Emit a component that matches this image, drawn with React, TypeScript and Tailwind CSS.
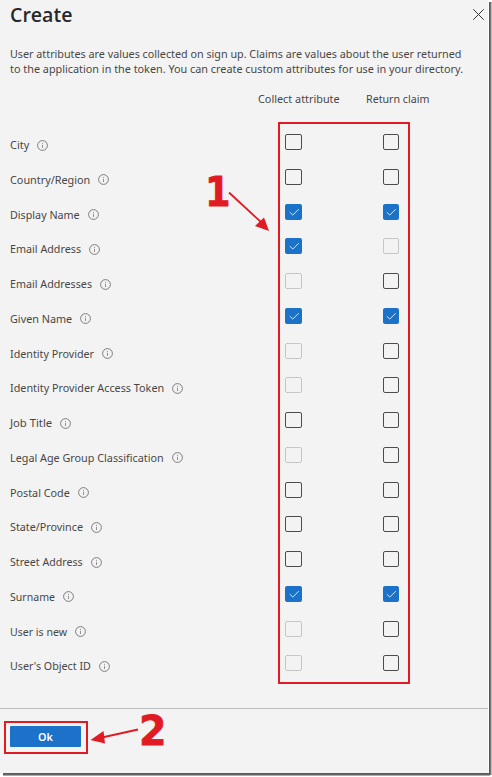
import { useLayoutEffect, useRef } from "react";

type Box = "on" | "off" | "disabled";

const rows: { label: string; width: number; collect: Box; claim: Box }[] = [
  { label: "City", width: 19, collect: "off", claim: "off" },
  { label: "Country/Region", width: 80, collect: "off", claim: "off" },
  { label: "Display Name", width: 70, collect: "on", claim: "on" },
  { label: "Email Address", width: 71, collect: "on", claim: "disabled" },
  { label: "Email Addresses", width: 82, collect: "disabled", claim: "off" },
  { label: "Given Name", width: 62, collect: "on", claim: "on" },
  { label: "Identity Provider", width: 84, collect: "disabled", claim: "off" },
  { label: "Identity Provider Access Token", width: 154, collect: "disabled", claim: "off" },
  { label: "Job Title", width: 42, collect: "off", claim: "off" },
  { label: "Legal Age Group Classification", width: 154, collect: "disabled", claim: "off" },
  { label: "Postal Code", width: 60, collect: "off", claim: "off" },
  { label: "State/Province", width: 73, collect: "off", claim: "off" },
  { label: "Street Address", width: 73, collect: "off", claim: "off" },
  { label: "Surname", width: 45, collect: "on", claim: "on" },
  { label: "User is new", width: 57, collect: "disabled", claim: "off" },
  { label: "User's Object ID", width: 81, collect: "disabled", claim: "off" },
];

/* Text condensed or widened to occupy an exact width. */
function FitText({ text, width, className = "" }: { text: string; width: number; className?: string }) {
  const ref = useRef<HTMLSpanElement>(null);
  useLayoutEffect(() => {
    const el = ref.current;
    if (el) el.style.transform = `scaleX(${width / el.offsetWidth})`;
  }, [width, text]);
  return (
    <span className={`block shrink-0 whitespace-nowrap ${className}`} style={{ width }}>
      <span ref={ref} className="inline-block origin-left">
        {text}
      </span>
    </span>
  );
}

function InfoIcon() {
  return (
    <svg className="ml-2 size-[11px] shrink-0" viewBox="0 0 11 11" fill="none">
      <circle cx="5.5" cy="5.5" r="4.9" stroke="#707070" strokeWidth="0.9" />
      <path d="M5.5 4.8v3.2M5.5 2.9v1" stroke="#858585" strokeWidth="0.9" />
    </svg>
  );
}

function Checkbox({ state }: { state: Box }) {
  if (state === "on") {
    return (
      <span className="flex h-4 w-full items-center justify-center rounded-[2px] bg-[#1b72c8]">
        <svg className="size-4" viewBox="0 0 16 16" fill="none">
          <path d="M3.8 8.2l3 2.9 6-6" stroke="#d3e6f7" strokeWidth="1" />
        </svg>
      </span>
    );
  }
  return (
    <span
      className={`block h-4 w-full rounded-[2px] border ${state === "off" ? "border-[#4c4c4c]" : "border-[#c6c6c6]"}`}
    />
  );
}

export default function App() {
  return (
    <div className="relative h-[777px] w-[492px] overflow-hidden bg-white font-['Noto_Sans',sans-serif] text-[11.5px] text-[#484644]">
      <div className="flex h-[774px] w-[488px] flex-col bg-[#f3f3f3]">
        <header className="flex h-[46px] items-start justify-between pl-[10px]">
          <FitText
            text="Create"
            width={62}
            className="font-['Open_Sans','Noto_Sans',sans-serif] text-[20.5px] leading-[28px] font-semibold text-[#292827]"
          />
          <svg className="mt-[9px] mr-[4px] size-[11px]" viewBox="0 0 11 11" fill="none">
            <path d="M.3.3l10.4 10.4M10.7.3L.3 10.7" stroke="#333" strokeWidth="1" />
          </svg>
        </header>
        <div className="h-[44px] pl-[10px] leading-[15px]">
          <FitText
            text="User attributes are values collected on sign up. Claims are values about the user returned"
            width={451}
          />
          <FitText
            text="to the application in the token. You can create custom attributes for use in your directory."
            width={453}
          />
        </div>
        <div className="flex h-[44px] pt-px pl-[258px] leading-[16px]">
          <FitText text="Collect attribute" width={82} />
          <FitText text="Return claim" width={63} className="ml-[26px]" />
        </div>
        <div className="flex flex-1 flex-col">
          {rows.map((r) => (
            <div key={r.label} className="flex h-[34.78px] items-start">
              <div className="flex w-[285px] items-center pt-[3px] pl-[10px] leading-4">
                <FitText text={r.label} width={r.width} />
                <InfoIcon />
              </div>
              <div className="w-[17px]">
                <Checkbox state={r.collect} />
              </div>
              <div className="ml-[81px] w-4">
                <Checkbox state={r.claim} />
              </div>
            </div>
          ))}
        </div>
        <footer className="h-[66px] border-t border-[#bdbdbd] pt-[17px] pl-[10px]">
          <button className="flex h-[21px] w-[71px] items-center justify-center rounded-[1px] bg-[#1b72c8] font-semibold text-white">
            <FitText text="Ok" width={15} />
          </button>
        </footer>
      </div>

      {/* Drop shadow along the right and bottom edges */}
      <div className="absolute top-[2px] left-[489px] h-[773px] w-[3px] bg-linear-to-r from-[#4a4a4a] via-[#777] to-[#e0e0e0]" />
      <div className="absolute top-[773px] left-[3px] h-[3px] w-[487px] bg-linear-to-b from-[#555] via-[#666] to-[#d0d0d0]" />

      {/* Callouts */}
      <div className="absolute top-[122px] left-[278px] h-[562px] w-[132px] border-2 border-[#e01b24]" />
      <div className="absolute top-[721px] left-[4px] h-[33px] w-[84px] border-2 border-[#e01b24]" />
      <svg className="absolute inset-0" width="492" height="777" viewBox="0 0 492 777">
        <g stroke="#e01b24" strokeWidth="1.8" fill="#e01b24">
          <path d="M229 192.500L262 223" />
          <path d="M138 729.500L102 737.500" />
          <path d="M269 231l-14-5 9-8.500z" stroke="none" />
          <path d="M90.500 740l13-9 1.500 12.500z" stroke="none" />
        </g>
      </svg>
      <div className="absolute top-[170px] left-[205px] font-['DejaVu_Sans',sans-serif] text-[41px] leading-[44px] font-bold text-[#e01b24] [-webkit-text-stroke:0.8px_#e01b24]">
        <FitText text="1" width={26} />
      </div>
      <div className="absolute top-[709px] left-[139px] font-['DejaVu_Sans',sans-serif] text-[41px] leading-[44px] font-bold text-[#e01b24] [-webkit-text-stroke:0.8px_#e01b24]">
        <FitText text="2" width={28} />
      </div>
    </div>
  );
}
